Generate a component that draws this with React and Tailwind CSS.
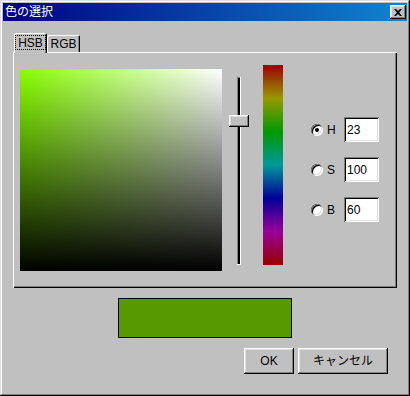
import React from "react";

const font = { fontFamily: '"Liberation Sans", "Noto Sans CJK JP", sans-serif' };

// raised 3d edge used by buttons
const raised =
  "shadow-[inset_-1px_-1px_0_#000,inset_1px_1px_0_#fff,inset_-2px_-2px_0_#808080,inset_2px_2px_0_#dfdfdf]";
const sunken =
  "shadow-[inset_1px_1px_0_#808080,inset_-1px_-1px_0_#fff,inset_2px_2px_0_#000,inset_-2px_-2px_0_#dfdfdf]";

function Radio({ checked }) {
  return (
    <div className="w-[12px] h-[12px] rounded-full bg-white flex items-center justify-center shadow-[inset_1px_1px_0_#808080,inset_-1px_-1px_0_#fff,inset_2px_2px_0_#000,inset_-2px_-2px_0_#dfdfdf]">
      {checked && <div className="w-[4px] h-[4px] rounded-full bg-black" />}
    </div>
  );
}

function Field({ label, value, checked }) {
  return (
    <div className="flex items-center h-[25px]">
      <Radio checked={checked} />
      <div className="w-[21px] pl-[4px] text-[12px] text-black leading-none">{label}</div>
      <div className={`w-[35px] h-[25px] bg-white flex items-center pl-[3px] text-[12px] text-black ${sunken}`}>
        {value}
      </div>
    </div>
  );
}

export default function App() {
  return (
    <div
      className="w-[410px] h-[396px] bg-[#c0c0c0] p-[3px] shadow-[inset_-1px_-1px_0_#000,inset_1px_1px_0_#dfdfdf,inset_-2px_-2px_0_#808080,inset_2px_2px_0_#fff] select-none"
      style={font}>
      {/* title bar */}
      <div className="h-[18px] flex items-center justify-between bg-[linear-gradient(to_right,#000080,#1084d0)]">
        <span className="pl-[2px] text-[12px] text-white leading-none">色の選択</span>
        <div className={`w-[16px] h-[14px] mr-[1px] bg-[#c0c0c0] flex items-center justify-center ${raised}`}>
          <svg width="8" height="7" viewBox="0 0 8 7">
            <path d="M0 0h2l2 2 2-2h2L5 3.5 8 7H6L4 5 2 7H0l3-3.5z" fill="#000" />
          </svg>
        </div>
      </div>

      <div className="pl-[10px]">
        {/* tabs */}
        <div className="mt-[12px] h-[19px] flex items-end pl-[1px]">
          <div className="relative z-10 -mb-[1px] w-[33px] h-[20px] bg-[#c0c0c0] rounded-t-[2px] flex justify-center pt-[2px] shadow-[inset_1px_1px_0_#fff,inset_-1px_0_0_#000,inset_-2px_0_0_#808080]">
            <div className="h-[15px] px-[2px] border border-dotted border-black flex items-center text-[12px] text-black leading-none">
              HSB
            </div>
          </div>
          <div className="w-[33px] h-[17px] rounded-t-[2px] flex items-center justify-center text-[12px] text-black leading-none shadow-[inset_1px_1px_0_#fff,inset_-1px_0_0_#000,inset_-2px_0_0_#808080]">
            RGB
          </div>
        </div>

        {/* panel */}
        <div className="w-[384px] h-[236px] flex items-start pl-[7px] shadow-[inset_1px_1px_0_#fff,inset_-1px_-1px_0_#000,inset_-2px_-2px_0_#808080]">
          <div className="mt-[17px] w-[202px] h-[202px] bg-[linear-gradient(to_bottom,rgba(0,0,0,0),#000),linear-gradient(to_right,#88ff00,#ffffff)]" />

          <div className="relative mt-[25px] ml-[7px] w-[20px] h-[188px]">
            <div className="absolute left-[8px] top-0 w-[4px] h-full bg-black shadow-[inset_-1px_-1px_0_#fff,inset_1px_1px_0_#808080]" />
            <div className={`absolute left-0 top-[38px] w-[20px] h-[12px] bg-[#c0c0c0] ${raised}`} />
          </div>

          <div className="mt-[13px] ml-[14px] w-[20px] h-[200px] bg-[linear-gradient(to_bottom,#990000,#999900,#009900,#009999,#000099,#990099,#990000)]" />

          <div className="mt-[65px] ml-[28px] flex flex-col gap-[15px]">
            <Field label="H" value="23" checked />
            <Field label="S" value="100" />
            <Field label="B" value="60" />
          </div>
        </div>

        {/* preview */}
        <div className="mt-[10px] ml-[105px] w-[174px] h-[40px] bg-[#579900] border border-black" />

        {/* buttons */}
        <div className="mt-[10px] ml-[231px] flex gap-[4px]">
          <button className={`w-[50px] h-[26px] bg-[#c0c0c0] text-[12px] text-black ${raised}`}>OK</button>
          <button className={`w-[90px] h-[26px] bg-[#c0c0c0] text-[12px] text-black ${raised}`}>キャンセル</button>
        </div>
      </div>
    </div>
  );
}
